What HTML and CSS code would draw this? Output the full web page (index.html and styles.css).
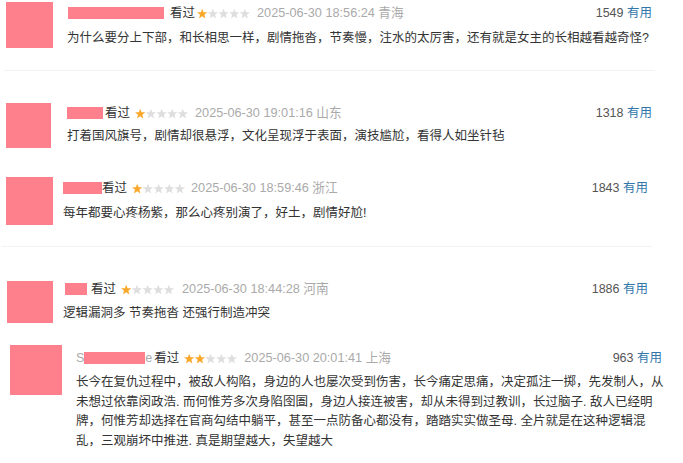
FILE: index.html
```html
<!DOCTYPE html>
<html lang="zh-CN">
<head>
<meta charset="utf-8">
<title>短评</title>
<link rel="stylesheet" href="styles.css">
</head>
<body>
<svg class="defs" width="0" height="0" aria-hidden="true">
  <defs>
    <symbol id="star" viewBox="0 0 10 10">
      <path d="M5 0.2 L6.3 3.5 L9.9 3.7 L7.1 5.95 L8.05 9.5 L5 7.5 L1.95 9.5 L2.9 5.95 L0.1 3.7 L3.7 3.5Z"/>
    </symbol>
  </defs>
</svg>

<div class="list">
  <div class="comment c1">
    <div class="avatar"></div>
    <div class="body">
      <div class="head">
        <div class="meta">
          <span class="name n1"></span>
          <span class="watched">看过</span>
          <svg class="stars" width="53" height="11" viewBox="0 0 53 11">
            <use href="#star" class="on" x="0" y="0.5" width="10.4" height="10.4"/>
            <use href="#star" class="off" x="10.7" y="0.5" width="10.4" height="10.4"/>
            <use href="#star" class="off" x="21.4" y="0.5" width="10.4" height="10.4"/>
            <use href="#star" class="off" x="32.1" y="0.5" width="10.4" height="10.4"/>
            <use href="#star" class="off" x="42.6" y="0.5" width="10.4" height="10.4"/>
          </svg>
          <span class="time">2025-06-30 18:56:24 青海</span>
        </div>
        <div class="vote"><span class="count">1549</span> <span class="useful">有用</span></div>
      </div>
      <p class="text">为什么要分上下部，和长相思一样，剧情拖沓，节奏慢，注水的太厉害，还有就是女主的长相越看越奇怪?</p>
    </div>
  </div>

  <div class="sep s1"></div>

  <div class="comment c2">
    <div class="avatar"></div>
    <div class="body">
      <div class="head">
        <div class="meta">
          <span class="name n2"></span>
          <span class="watched">看过</span>
          <svg class="stars" width="53" height="11" viewBox="0 0 53 11">
            <use href="#star" class="on" x="0" y="0.5" width="10.4" height="10.4"/>
            <use href="#star" class="off" x="10.7" y="0.5" width="10.4" height="10.4"/>
            <use href="#star" class="off" x="21.4" y="0.5" width="10.4" height="10.4"/>
            <use href="#star" class="off" x="32.1" y="0.5" width="10.4" height="10.4"/>
            <use href="#star" class="off" x="42.6" y="0.5" width="10.4" height="10.4"/>
          </svg>
          <span class="time">2025-06-30 19:01:16 山东</span>
        </div>
        <div class="vote"><span class="count">1318</span> <span class="useful">有用</span></div>
      </div>
      <p class="text">打着国风旗号，剧情却很悬浮，文化呈现浮于表面，演技尴尬，看得人如坐针毡</p>
    </div>
  </div>

  <div class="comment c3">
    <div class="avatar"></div>
    <div class="body">
      <div class="head">
        <div class="meta">
          <span class="name n3"></span>
          <span class="watched">看过</span>
          <svg class="stars" width="53" height="11" viewBox="0 0 53 11">
            <use href="#star" class="on" x="0" y="0.5" width="10.4" height="10.4"/>
            <use href="#star" class="off" x="10.7" y="0.5" width="10.4" height="10.4"/>
            <use href="#star" class="off" x="21.4" y="0.5" width="10.4" height="10.4"/>
            <use href="#star" class="off" x="32.1" y="0.5" width="10.4" height="10.4"/>
            <use href="#star" class="off" x="42.6" y="0.5" width="10.4" height="10.4"/>
          </svg>
          <span class="time">2025-06-30 18:59:46 浙江</span>
        </div>
        <div class="vote"><span class="count">1843</span> <span class="useful">有用</span></div>
      </div>
      <p class="text">每年都要心疼杨紫，那么心疼别演了，好土，剧情好尬!</p>
    </div>
  </div>

  <div class="sep s2"></div>

  <div class="comment c4">
    <div class="avatar"></div>
    <div class="body">
      <div class="head">
        <div class="meta">
          <span class="name n4"></span>
          <span class="watched">看过</span>
          <svg class="stars" width="53" height="11" viewBox="0 0 53 11">
            <use href="#star" class="on" x="0" y="0.5" width="10.4" height="10.4"/>
            <use href="#star" class="off" x="10.7" y="0.5" width="10.4" height="10.4"/>
            <use href="#star" class="off" x="21.4" y="0.5" width="10.4" height="10.4"/>
            <use href="#star" class="off" x="32.1" y="0.5" width="10.4" height="10.4"/>
            <use href="#star" class="off" x="42.6" y="0.5" width="10.4" height="10.4"/>
          </svg>
          <span class="time">2025-06-30 18:44:28 河南</span>
        </div>
        <div class="vote"><span class="count">1886</span> <span class="useful">有用</span></div>
      </div>
      <p class="text">逻辑漏洞多 节奏拖沓 还强行制造冲突</p>
    </div>
  </div>

  <div class="comment c5">
    <div class="avatar"></div>
    <div class="body">
      <div class="head">
        <div class="meta">
          <span class="nick">S<span class="name n5"></span>e</span>
          <span class="watched">看过</span>
          <svg class="stars" width="53" height="11" viewBox="0 0 53 11">
            <use href="#star" class="on" x="0" y="0.5" width="10.4" height="10.4"/>
            <use href="#star" class="on" x="10.7" y="0.5" width="10.4" height="10.4"/>
            <use href="#star" class="off" x="21.4" y="0.5" width="10.4" height="10.4"/>
            <use href="#star" class="off" x="32.1" y="0.5" width="10.4" height="10.4"/>
            <use href="#star" class="off" x="42.6" y="0.5" width="10.4" height="10.4"/>
          </svg>
          <span class="time">2025-06-30 20:01:41 上海</span>
        </div>
        <div class="vote"><span class="count">963</span> <span class="useful">有用</span></div>
      </div>
      <p class="text long">长今在复仇过程中，被敌人构陷，身边的人也屡次受到伤害，长今痛定思痛，决定孤注一掷，先发制人，从<br>未想过依靠闵政浩. 而何惟芳多次身陷囹圄，身边人接连被害，却从未得到过教训，长过脑子. 敌人已经明<br>牌，何惟芳却选择在官商勾结中躺平，甚至一点防备心都没有，踏踏实实做圣母. 全片就是在这种逻辑混<br>乱，三观崩坏中推进. 真是期望越大，失望越大</p>
    </div>
  </div>
</div>
</body>
</html>
```

FILE: styles.css
```css
html, body {
  margin: 0;
  padding: 0;
  background: #fff;
}

body {
  font-family: "Liberation Sans", "Noto Sans CJK SC", sans-serif;
  font-size: 12.5px;
  color: #333;
  width: 683px;
  height: 463px;
  overflow: hidden;
}

.defs {
  position: absolute;
  width: 0;
  height: 0;
}

.list {
  display: flex;
  flex-direction: column;
}

.comment {
  display: flex;
  align-items: flex-start;
}

.avatar {
  background: #ff808d;
  flex: none;
}

.body {
  display: flex;
  flex-direction: column;
}

.head {
  display: flex;
  justify-content: space-between;
  align-items: center;
  height: 20px;
  line-height: 20px;
}

.meta {
  display: flex;
  align-items: center;
}

.name {
  display: inline-block;
  height: 12px;
  background: #ff808d;
}

.nick {
  display: inline-flex;
  align-items: center;
  color: #aaa;
}

.watched {
  color: #333;
}

.stars {
  display: block;
  flex: none;
}

.stars .on {
  fill: #f9a82b;
}

.stars .off {
  fill: #dedede;
}

.time {
  color: #aaa;
  font-size: 12.7px;
}

.vote {
  white-space: nowrap;
}

.count {
  color: #555;
}

.useful {
  color: #3377aa;
}

.text {
  margin: 0;
  line-height: 20px;
  white-space: nowrap;
}

.text.long {
  line-height: 19.7px;
}

.sep {
  height: 1px;
  background: #f3f3f3;
}

/* comment 1 */
.c1 {
  padding-top: 2px;
  padding-left: 6px;
  gap: 14px;
}
.c1 .avatar { width: 47px; height: 46px; }
.c1 .body { width: 585px; padding-top: 1px; }
.c1 .text { margin-top: 5px; }
.n1 { width: 96px; margin-left: 1px; }
.c1 .watched { margin-left: 6px; margin-right: 2px; }
.c1 .time { margin-left: 7px; }

.s1 {
  margin-top: 22px;
  margin-left: 4px;
  width: 651px;
}

/* comment 2 */
.c2 {
  margin-top: 32px;
  padding-left: 6px;
  gap: 16px;
}
.c2 .avatar { width: 45px; height: 45px; }
.c2 .body { width: 585px; }
.c2 .text { margin-top: 3px; }
.n2 { width: 36px; }
.c2 .watched { margin-left: 2px; margin-right: 5px; }
.c2 .time { margin-left: 7px; }

/* comment 3 */
.c3 {
  margin-top: 29px;
  padding-left: 6px;
  gap: 10px;
}
.c3 .avatar { width: 47px; height: 48px; }
.c3 .body { width: 585px; padding-top: 1px; }
.c3 .text { margin-top: 5px; }
.n3 { width: 39px; }
.c3 .watched { margin-right: 5px; }
.c3 .time { margin-left: 6px; }

.s2 {
  margin-top: 21px;
  margin-left: 2px;
  width: 650px;
}

/* comment 4 */
.c4 {
  margin-top: 32px;
  padding-left: 7px;
  gap: 10px;
}
.c4 .avatar { width: 46px; height: 42px; margin-top: 2px; }
.c4 .body { width: 585px; }
.c4 .text { margin-top: 4px; }
.n4 { width: 22px; margin-left: 2px; }
.c4 .watched { margin-left: 4px; margin-right: 5px; }
.c4 .time { margin-left: 8px; }

/* comment 5 */
.c5 {
  margin-top: 22px;
  padding-left: 10px;
  gap: 14px;
}
.c5 .avatar { width: 52px; height: 50px; }
.c5 .body { width: 586px; padding-top: 3px; }
.c5 .text { margin-top: 5px; }
.n5 { width: 61px; margin-left: 0; }
.c5 .watched { margin-left: 2px; margin-right: 5px; }
.c5 .time { margin-left: 7px; }
```
